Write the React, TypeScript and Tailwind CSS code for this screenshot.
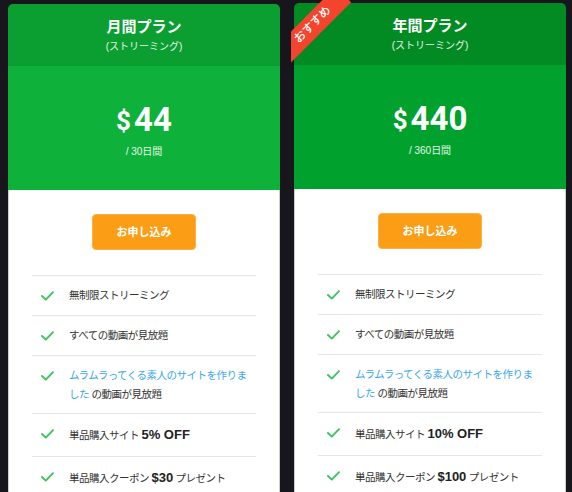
import React from "react";

const JP = '"Helvetica Neue", "Liberation Sans", "Noto Sans CJK JP", sans-serif';

function Check() {
  return (
    <svg width="13" height="10" viewBox="0 0 13 10" className="shrink-0 mt-[5px]">
      <polyline points="1,5 4.8,8.6 12,1.2" fill="none" stroke="#3ec25b" strokeWidth="1.9" strokeLinecap="round" strokeLinejoin="round" />
    </svg>
  );
}

function Row({ children, lh = "leading-[19px]" }: { children: React.ReactNode; lh?: string }) {
  return (
    <li className="flex items-start border-t border-[#e6e6e6] px-[9px] py-[10px]">
      <Check />
      <div className={`ml-[15px] text-[10.5px] tracking-[-0.5px] text-[#333] ${lh}`}>{children}</div>
    </li>
  );
}

function Card({
  title,
  price,
  per,
  off,
  coupon,
  headBg,
  priceBg,
  top,
  featured,
}: {
  title: string;
  price: string;
  per: string;
  off: string;
  coupon: string;
  headBg: string;
  priceBg: string;
  top: string;
  featured?: boolean;
}) {
  return (
    <div className={`relative flex h-[488px] w-[272px] flex-col ${top}`}>
      {featured && (
        <div className="absolute left-[-3px] top-[-3px] z-10 h-[70px] w-[70px] overflow-hidden">
          <div className="absolute left-[-21px] top-[14px] flex h-[22px] w-[86px] -rotate-45 items-center justify-center bg-[#f3452d] text-[11.5px] font-medium leading-none text-white">
            おすすめ
          </div>
        </div>
      )}
      <div className={`rounded-t-[5px] ${headBg} pt-[11px] pb-[11px] text-center text-white`}>
        <div className="text-[15px] font-bold leading-[24px]">{title}</div>
        <div className="text-[10px] leading-[16px] text-white/90">(ストリーミング)</div>
      </div>
      <div className={`${priceBg} pt-[34px] pb-[30px] text-center text-white`}>
        <div className="flex h-[40px] items-center justify-center overflow-hidden" style={{ fontFamily: "Roboto, sans-serif" }}>
          <span className="mr-[3px] mt-[2px] text-[26px] font-bold leading-[40px]">$</span>
          <span className="text-[33px] font-bold leading-[40px]">{price}</span>
        </div>
        <div className="mt-[4px] text-[10px] leading-[16px] text-white/90">/ {per}日間</div>
      </div>
      <div className="flex flex-1 flex-col border-x border-b border-[#cdcdcd] bg-white px-[23px] pt-[24px]">
        <div className="flex justify-center">
          <button className="h-[36px] w-[104px] rounded-[4px] border border-[#fdb048] bg-[#fb9d15] text-[11px] font-bold text-white">
            お申し込み
          </button>
        </div>
        <ul className="mt-[25px]">
          <Row>無制限ストリーミング</Row>
          <Row>すべての動画が見放題</Row>
          <Row lh="leading-[18.5px]">
            <span className="text-[#3aa7ec]">ムラムラってくる素人のサイトを作りました</span> の動画が見放題
          </Row>
          <Row lh="leading-[22px]">
            単品購入サイト <span className="text-[13px] font-bold tracking-normal text-[#222]">{off} OFF</span>
          </Row>
          <Row lh="leading-[22px]">
            単品購入クーポン <span className="text-[13px] font-bold tracking-normal text-[#222]">${coupon}</span> プレゼント
          </Row>
        </ul>
      </div>
    </div>
  );
}

export default function App() {
  return (
    <div className="flex h-[492px] w-[572px] gap-[14px] overflow-hidden bg-[#17161c] pl-[8px]" style={{ fontFamily: JP }}>
      <Card
        title="月間プラン"
        price="44"
        per="30"
        off="5%"
        coupon="30"
        headBg="bg-[#0b9e31]"
        priceBg="bg-[#0eb13a]"
        top="mt-[4px]"
      />
      <Card
        title="年間プラン"
        price="440"
        per="360"
        off="10%"
        coupon="100"
        headBg="bg-[#028b22]"
        priceBg="bg-[#00a12c]"
        top="mt-[3px]"
        featured
      />
    </div>
  );
}
